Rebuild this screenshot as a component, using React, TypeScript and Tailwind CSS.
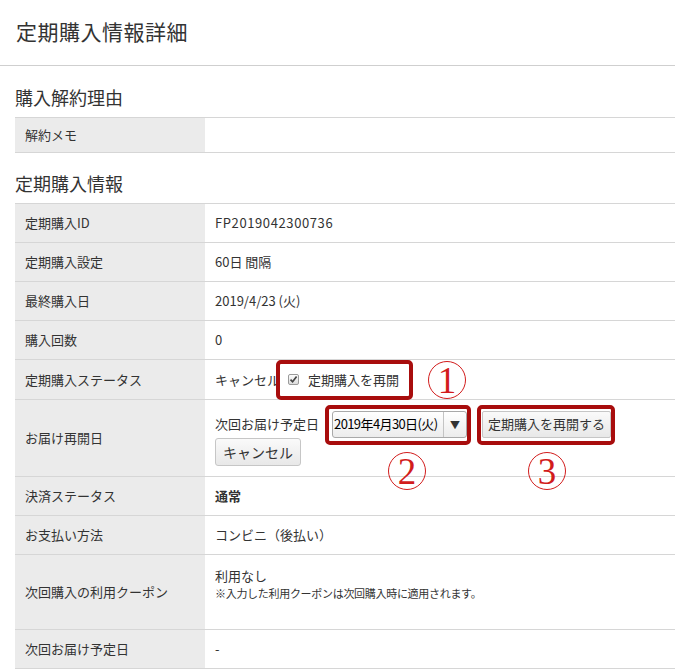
import React from 'react'

const font = { fontFamily: '"Noto Sans CJK JP", "Noto Sans", sans-serif' }

type Row = { label: string; value: React.ReactNode; h: string }

function Label({ children }: { children: React.ReactNode }) {
  return (
    <div className="w-[190px] shrink-0 bg-[#ebebeb] px-[10px] flex items-center text-[13px] text-[#333]">
      {children}
    </div>
  )
}

function Circled({ n }: { n: string }) {
  return (
    <div className="w-[38px] h-[38px] rounded-full border-[1.5px] border-[#d21c1c] flex items-center justify-center">
      <span
        className="text-[37px] leading-none text-[#d21c1c] mt-[1px]"
        style={{ fontFamily: '"Liberation Serif", "DejaVu Serif", serif' }}
      >
        {n}
      </span>
    </div>
  )
}

function CheckBox() {
  return (
    <span className="w-[11px] h-[11px] border border-[#9a9a9a] rounded-[2px] bg-gradient-to-b from-[#fdfdfd] to-[#dcdcdc] flex items-center justify-center">
      <svg width="9" height="9" viewBox="0 0 9 9">
        <path d="M1.5 4.6 L3.6 6.8 L7.6 1.6" fill="none" stroke="#444" strokeWidth="1.7" />
      </svg>
    </span>
  )
}

export default function App() {
  const rows: Row[] = [
    { label: '定期購入ID', value: <span className="tracking-[0.6px]">FP2019042300736</span>, h: 'h-[39px]' },
    { label: '定期購入設定', value: '60日 間隔', h: 'h-[39px]' },
    { label: '最終購入日', value: '2019/4/23 (火)', h: 'h-[39px]' },
    { label: '購入回数', value: '0', h: 'h-[39px]' },
  ]
  const tail: Row[] = [
    { label: '決済ステータス', value: <span className="font-bold">通常</span>, h: 'h-[39px]' },
    { label: 'お支払い方法', value: 'コンビニ（後払い）', h: 'h-[39px]' },
  ]

  const simpleRow = (r: Row) => (
    <div key={r.label} className={`flex border-b border-[#d6d6d6] ${r.h}`}>
      <Label>{r.label}</Label>
      <div className="flex-1 px-[10px] flex items-center text-[13px] text-[#333]">{r.value}</div>
    </div>
  )

  return (
    <div className="relative w-[675px] h-[670px] overflow-hidden bg-white text-[#333]" style={font}>
      <div className="h-[66px] border-b border-[#cfcfcf] pl-[16px] pb-[4px] flex items-center">
        <h1 className="text-[21px] leading-[24px] tracking-[0.5px] font-normal">定期購入情報詳細</h1>
      </div>

      <div className="pl-[15px]">
        <div className="h-[51px] flex items-end pb-[10px]">
          <h2 className="text-[18px] leading-[20px] font-normal">購入解約理由</h2>
        </div>
        <div className="border-t border-[#d6d6d6]">
          <div className="flex h-[35px] border-b border-[#d6d6d6]">
            <Label>解約メモ</Label>
            <div className="flex-1" />
          </div>
        </div>

        <div className="h-[50px] flex items-end pb-[10px]">
          <h2 className="text-[18px] leading-[20px] font-normal">定期購入情報</h2>
        </div>
        <div className="border-t border-[#d6d6d6]">
          {rows.map(simpleRow)}

          <div className="flex h-[40px] border-b border-[#d6d6d6]">
            <Label>定期購入ステータス</Label>
            <div className="flex-1 px-[10px] flex items-center text-[13px]">
              <span>キャンセル</span>
              <span className="ml-[8px]">
                <CheckBox />
              </span>
              <span className="ml-[9px]">定期購入を再開</span>
            </div>
          </div>

          <div className="flex h-[77px] border-b border-[#d6d6d6]">
            <Label>お届け再開日</Label>
            <div className="flex-1 px-[10px] pt-[10px] flex flex-col items-start text-[13px]">
              <div className="flex items-center h-[28px]">
                <span>次回お届け予定日</span>
                <div className="ml-[13px] w-[135px] h-[27px] border border-[#a9a9a9] rounded-[3px] bg-gradient-to-b from-white to-[#ececec] flex items-center">
                  <span className="flex-1 pl-[1px] text-[13px] tracking-[-0.6px] text-black">2019年4月30日(火)</span>
                  <span className="w-px h-full bg-[#c4c4c4]" />
                  <span className="w-[22px] text-center text-[10px] text-[#333]">▼</span>
                </div>
                <button className="ml-[15px] h-[27px] px-[5px] border border-[#c6c6c6] rounded-[2px] bg-gradient-to-b from-[#fafafa] to-[#e8e8e8] text-[13px] text-[#333]">
                  定期購入を再開する
                </button>
              </div>
              <button className="h-[28px] w-[86px] border border-[#c6c6c6] rounded-[3px] bg-gradient-to-b from-[#fafafa] to-[#e8e8e8] text-[14px] text-[#333]">
                キャンセル
              </button>
            </div>
          </div>

          {tail.map(simpleRow)}

          <div className="flex h-[75px] border-b border-[#d6d6d6]">
            <Label>次回購入の利用クーポン</Label>
            <div className="flex-1 px-[10px] pt-[12px] text-[#333]">
              <div className="text-[13px] leading-[18px]">利用なし</div>
              <div className="text-[11px] leading-[16px] tracking-[-0.3px]">※入力した利用クーポンは次回購入時に適用されます。</div>
            </div>
          </div>

          <div className="flex h-[39px] border-b border-[#d6d6d6]">
            <Label>次回お届け予定日</Label>
            <div className="flex-1 px-[10px] flex items-center text-[13px]">-</div>
          </div>
        </div>
      </div>

      {/* annotations */}
      <div className="absolute left-[276px] top-[360px] w-[137px] h-[40px] border-[4px] border-[#a80d0d] rounded-[5px]" />
      <div className="absolute left-[325px] top-[405px] w-[146px] h-[40px] border-[4px] border-[#a80d0d] rounded-[5px]" />
      <div className="absolute left-[477px] top-[405px] w-[138px] h-[40px] border-[4px] border-[#a80d0d] rounded-[5px]" />
      <div className="absolute left-[428px] top-[361px]">
        <Circled n="1" />
      </div>
      <div className="absolute left-[388px] top-[452px]">
        <Circled n="2" />
      </div>
      <div className="absolute left-[528px] top-[452px]">
        <Circled n="3" />
      </div>
    </div>
  )
}
